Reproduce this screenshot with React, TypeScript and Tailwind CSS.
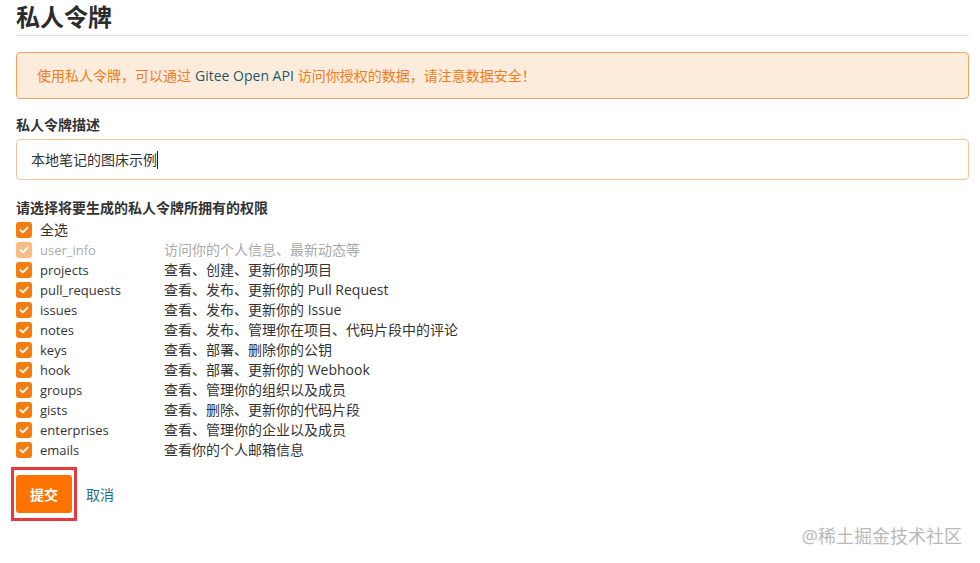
import React from "react";

const perms = [
  { name: "全选", desc: "", all: true },
  { name: "user_info", desc: "访问你的个人信息、最新动态等", disabled: true },
  { name: "projects", desc: "查看、创建、更新你的项目" },
  { name: "pull_requests", desc: "查看、发布、更新你的 Pull Request" },
  { name: "issues", desc: "查看、发布、更新你的 Issue" },
  { name: "notes", desc: "查看、发布、管理你在项目、代码片段中的评论" },
  { name: "keys", desc: "查看、部署、删除你的公钥" },
  { name: "hook", desc: "查看、部署、更新你的 Webhook" },
  { name: "groups", desc: "查看、管理你的组织以及成员" },
  { name: "gists", desc: "查看、删除、更新你的代码片段" },
  { name: "enterprises", desc: "查看、管理你的企业以及成员" },
  { name: "emails", desc: "查看你的个人邮箱信息" },
];

function CheckBox({ faded }: { faded?: boolean }) {
  return (
    <span
      className={`w-4 h-4 rounded-[3px] flex items-center justify-center shrink-0 ${
        faded ? "bg-[#f8bd85]" : "bg-[#f57c0f]"
      }`}
    >
      <svg viewBox="0 0 16 16" className="w-3 h-3" fill="none">
        <path d="M3.2 8.2 6.5 11.2 12.8 4.8" stroke="white" strokeWidth="2.6" strokeLinecap="round" strokeLinejoin="round" />
      </svg>
    </span>
  );
}

export default function App() {
  return (
    <div
      className="relative w-[980px] h-[563px] bg-white text-[#333] overflow-hidden pl-4 pr-[11px]"
      style={{ fontFamily: '"Open Sans", "Noto Sans CJK SC", sans-serif' }}
    >
      <div className="border-b border-[#e3e3e3] h-[36px] flex items-start">
        <h1 className="text-[24px] leading-[33px] font-bold text-[#2c2c2c]">私人令牌</h1>
      </div>

      <div className="mt-4 h-[47px] rounded-[4px] border border-[#efa464] bg-[#fdecdc] flex items-center pl-5 text-[14px] text-[#ef7c24]">
        使用私人令牌，可以通过 <span className="text-[#25586a] mx-1">Gitee Open API</span> 访问你授权的数据，请注意数据安全！
      </div>

      <div className="mt-[16px] text-[14px] font-bold leading-[20px] text-[#333]">私人令牌描述</div>
      <div className="mt-[4px] h-[41px] rounded-[4px] border border-[#f4c697] flex items-center pl-[14px] text-[14px] text-[#333]">
        本地笔记的图床示例
        <span className="inline-block w-px h-[18px] bg-[#222]" />
      </div>

      <div className="mt-[18px] text-[14px] font-bold leading-[20px] text-[#333]">请选择将要生成的私人令牌所拥有的权限</div>
      <div className="mt-[2px] flex flex-col">
        {perms.map((p) => (
          <div key={p.name} className="h-5 flex items-center leading-[20px]">
            <CheckBox faded={p.disabled} />
            <span className={`ml-2 w-[124px] ${p.all ? "text-[14px]" : "text-[13px]"} ${p.disabled ? "text-[#aaa]" : "text-[#333]"}`}>
              {p.name}
            </span>
            <span className={`text-[14px] ${p.disabled ? "text-[#aaa]" : "text-[#333]"}`}>{p.desc}</span>
          </div>
        ))}
      </div>

      <div className="mt-[7px] flex items-center">
        <div className="-ml-[5px] border-[3px] border-[#e5383f] px-[2px] py-[5px]">
          <button className="w-[56px] h-[38px] rounded-[3px] bg-[#fe7300] text-white text-[14px] font-bold">提交</button>
        </div>
        <a className="ml-[9px] text-[14px] text-[#1f6d8c]">取消</a>
      </div>

      <div className="absolute right-[18px] top-[523px] text-[18px] text-[#b9b9b9]">@稀土掘金技术社区</div>
    </div>
  );
}
